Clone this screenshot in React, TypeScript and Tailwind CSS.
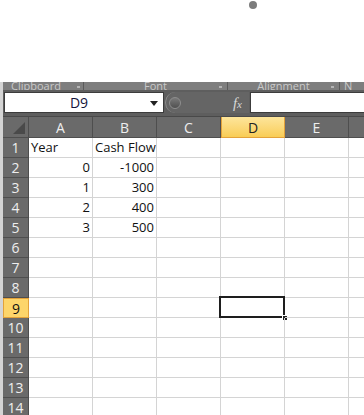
import React from 'react';

const COLS = ['A', 'B', 'C', 'D', 'E', 'F'];
const DATA: Record<number, (string | number)[]> = {
  1: ['Year', 'Cash Flow'],
  2: [0, -1000],
  3: [1, 300],
  4: [2, 400],
  5: [3, 500],
};

const font = { fontFamily: '"Open Sans", "Liberation Sans", sans-serif' };

const App: React.FC = () => {
  const rows = Array.from({ length: 14 }, (_, i) => i + 1);

  return (
    <div className="w-[364px] h-[415px] overflow-hidden bg-white" style={font}>
      {/* blank area above the ribbon */}
      <div className="h-[82px] flex justify-center">
        <div className="ml-[142px] mt-[1px] w-[8px] h-[8px] rounded-full bg-[#7c7c7c]" />
      </div>

      <div className="flex">
        <div className="w-[3px] shrink-0 bg-[#d4d4d4]" />
        <div className="flex-1 min-w-0 flex flex-col">
          {/* ribbon group labels, cut at the top */}
          <div className="h-[8px] flex bg-[#7e7e7e] overflow-hidden text-[11px] text-[#c9c9c9] leading-none">
            <div className="w-[81px] shrink-0 flex items-end relative border-r border-[#5a5a5a]">
              <span className="ml-[8px] -mb-[1px]">Clipboard</span>
              <span className="absolute right-[3px] bottom-[2px] w-[3px] h-[2px] bg-[#b5b5b5]" />
            </div>
            <div className="w-[144px] shrink-0 flex items-end justify-center relative border-r border-[#5a5a5a]">
              <span className="-mb-[1px]">Font</span>
              <span className="absolute right-[5px] bottom-[2px] w-[3px] h-[2px] bg-[#b5b5b5]" />
            </div>
            <div className="w-[112px] shrink-0 flex items-end justify-center relative border-r border-[#5a5a5a]">
              <span className="-mb-[1px]">Alignment</span>
              <span className="absolute right-[5px] bottom-[2px] w-[3px] h-[2px] bg-[#b5b5b5]" />
            </div>
            <div className="flex-1 flex items-end pl-[4px]">
              <span className="-mb-[1px]">N</span>
            </div>
          </div>

          {/* formula bar */}
          <div className="h-[27px] bg-[#5e5e5e] pt-[2px] pb-[4px] border-b border-[#494949]">
            <div className="h-[21px] flex">
              <div className="w-[160px] shrink-0 ml-[1px] bg-white border border-[#3c3c3c] flex items-center relative">
                <span className="flex-1 text-center text-[14px] text-[#14143c] pr-[10px]">D9</span>
                <svg className="absolute right-[5px] top-[8px]" width="8" height="5" viewBox="0 0 8 5">
                  <path d="M0 0 H8 L4 5 Z" fill="#222" />
                </svg>
              </div>
              <div className="w-[84px] shrink-0 ml-[1px] rounded-l-full bg-[#656565] border-l border-[#8c8c8c] flex items-center relative">
                <div className="ml-[3px] w-[12px] h-[12px] rounded-full bg-gradient-to-b from-[#7a7a7a] to-[#505050] border border-[#8e8e8e]" />
                <span className="absolute right-[7px] top-[0px] text-[15px] italic text-[#d8d8d8]" style={{ fontFamily: '"Liberation Serif", serif' }}>
                  f<span className="text-[11px]">x</span>
                </span>
              </div>
              <div className="flex-1 ml-[1px] bg-white border-y border-l border-[#3c3c3c]" />
            </div>
          </div>

          {/* sheet */}
          <div className="grid grid-cols-[26px_64px_64px_64px_64px_64px_64px] text-[13px]">
            <div className="h-[21px] bg-[#6a6a6a] border-r border-b border-[#4e4e4e] flex items-end justify-end p-[3px]">
              <svg width="12" height="12" viewBox="0 0 12 12">
                <path d="M12 0 V12 H0 Z" fill="#4a4a4a" />
              </svg>
            </div>
            {COLS.map((c) =>
              c === 'D' ? (
                <div key={c} className="h-[21px] bg-gradient-to-b from-[#fde59a] to-[#f9cd55] border-x border-b border-[#e3a23a] flex items-center justify-center text-[14px] text-[#222]">
                  {c}
                </div>
              ) : (
                <div key={c} className="h-[21px] bg-[#6a6a6a] border-r border-b border-[#4e4e4e] flex items-center justify-center text-[14px] text-[#eeeeee]">
                  {c}
                </div>
              )
            )}

            {rows.map((r) => (
              <React.Fragment key={r}>
                {r === 9 ? (
                  <div className="h-[20px] bg-[#fdd56a] border border-[#e3a23a] flex items-center justify-center text-[14px] text-[#111]">
                    {r}
                  </div>
                ) : (
                  <div className="h-[20px] bg-[#6a6a6a] border-r border-b border-[#4e4e4e] flex items-center justify-center text-[14px] text-[#eeeeee]">
                    {r}
                  </div>
                )}
                {COLS.map((c, ci) => {
                  const v = DATA[r]?.[ci];
                  const isNum = typeof v === 'number';
                  const selected = r === 9 && c === 'D';
                  return (
                    <div
                      key={c}
                      className={`h-[20px] border-r border-b border-[#d4d4d4] flex items-center px-[2px] text-[#111] relative ${
                        isNum ? 'justify-end' : 'justify-start'
                      } ${r === 1 ? 'overflow-visible whitespace-nowrap' : ''}`}
                    >
                      {v !== undefined ? String(v) : ''}
                      {selected && (
                        <>
                          <div className="absolute -left-[2px] -top-[2px] w-[66px] h-[22px] border-2 border-[#1e1e1e]" />
                          <div className="absolute -right-[4px] -bottom-[4px] w-[6px] h-[6px] bg-[#1e1e1e] border border-white" />
                        </>
                      )}
                    </div>
                  );
                })}
              </React.Fragment>
            ))}
          </div>
        </div>
      </div>
    </div>
  );
};

export default App;
